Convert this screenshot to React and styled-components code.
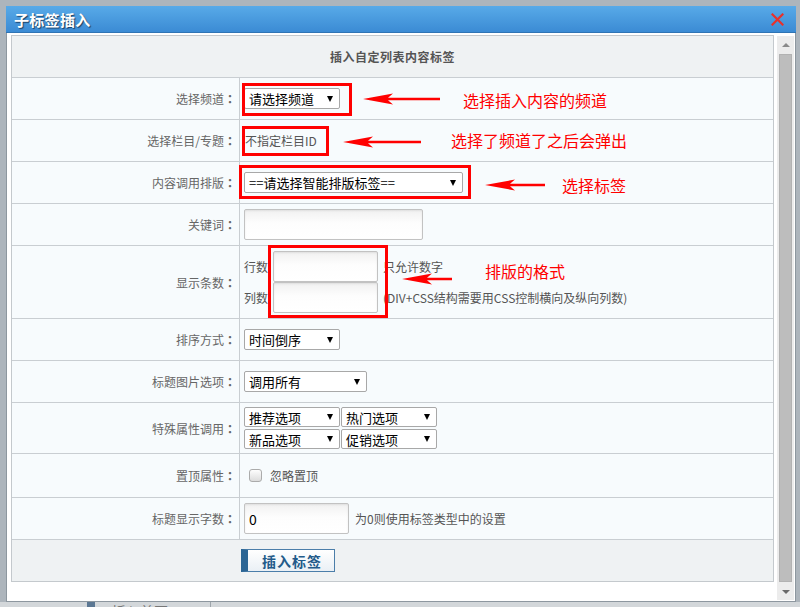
import React from "react";
import styled, { createGlobalStyle } from "styled-components";

const GlobalStyle = createGlobalStyle`
  html, body { margin: 0; padding: 0; }
  body {
    background: #adb5bc;
    font-family: "Noto Sans CJK SC", "Noto Sans", sans-serif;
    overflow: hidden;
  }
  #root { width: 800px; height: 607px; overflow: hidden; }
`;

const Page = styled.div`
  width: 800px;
  height: 607px;
  box-sizing: border-box;
  padding: 6px 0 0 6px;
  display: flex;
  flex-direction: column;
  overflow: hidden;
`;

const Dialog = styled.div`
  width: 790px;
  height: 596px;
  flex-shrink: 0;
  box-sizing: border-box;
  background: #fff;
  border: 1px solid #8d979f;
  border-top: none;
  display: flex;
  flex-direction: column;
`;

const TitleBar = styled.div`
  height: 27px;
  flex-shrink: 0;
  box-sizing: border-box;
  margin: 0 -1px;
  padding: 0 12px 0 8px;
  display: flex;
  align-items: center;
  justify-content: space-between;
  background: linear-gradient(#58aae8, #3b8bd4);
  border-bottom: 1px solid #2f74b4;
`;

const Title = styled.div`
  font-size: 15px;
  font-weight: 700;
  color: #fff;
  text-shadow: 1px 1px 1px #1c3f63;
  letter-spacing: 0.3px;
`;

const Close = styled.svg`
  width: 13px;
  height: 13px;
  display: block;
`;

const Content = styled.div`
  flex: 1;
  display: flex;
  gap: 3px;
  padding: 2px 1px 0 4px;
  min-height: 0;
`;

const Table = styled.div`
  position: relative;
  width: 763px;
  align-self: flex-start;
  box-sizing: border-box;
  border: 1px solid #c4c9cd;
  border-bottom: none;
  display: flex;
  flex-direction: column;
`;

const HeadRow = styled.div`
  height: 42px;
  box-sizing: border-box;
  border-bottom: 1px solid #c9ced2;
  background: #eff2f3;
  display: flex;
  align-items: center;
  justify-content: center;
  font-size: 12px;
  font-weight: 700;
  color: #555;
  letter-spacing: 0.5px;
`;

const Row = styled.div`
  height: ${(p) => p.$h || 42}px;
  box-sizing: border-box;
  border-bottom: 1px solid #c9ced2;
  background: #f7fbfd;
  display: grid;
  grid-template-columns: 228px 1fr;
`;

const Label = styled.div`
  box-sizing: border-box;
  border-right: 1px solid #c9ced2;
  display: flex;
  align-items: center;
  justify-content: flex-end;
  padding-right: 3px;
  font-size: 12px;
  color: #666;
`;

const Colon = styled.span`
  font-family: "Noto Sans CJK TC", "Noto Sans CJK SC", sans-serif;
  font-weight: 700;
`;

const Field = styled.div`
  display: flex;
  flex-direction: ${(p) => (p.$col ? "column" : "row")};
  align-items: ${(p) => (p.$col ? "flex-start" : "center")};
  justify-content: ${(p) => (p.$col ? "center" : "flex-start")};
  padding-left: 4px;
  font-size: 12px;
  color: #555;
`;

const Select = styled.div`
  box-sizing: border-box;
  width: ${(p) => p.$w}px;
  height: ${(p) => p.$h || 21}px;
  border: 1px solid #a8a8a8;
  border-radius: 2px;
  background: #fff;
  display: flex;
  align-items: center;
  justify-content: space-between;
  padding: 0 6px 0 4px;
  font-size: 13px;
  color: #000;
  white-space: nowrap;
`;

const Caret = styled.span`
  width: 0;
  height: 0;
  border-left: 3.5px solid transparent;
  border-right: 3.5px solid transparent;
  border-top: 6px solid #000;
`;

const SelectGrid = styled.div`
  display: grid;
  grid-template-columns: 96px 96px;
  column-gap: 1px;
  row-gap: 2px;
`;

const TextInput = styled.input`
  box-sizing: border-box;
  width: ${(p) => p.$w}px;
  height: 31px;
  margin: 0 0 0 ${(p) => p.$ml || 0}px;
  border: 1px solid #c2c2c2;
  border-radius: 2px;
  background: linear-gradient(#f1f1f1, #fdfdfd 45%, #fff);
  box-shadow: inset 0 1px 2px rgba(0, 0, 0, 0.08);
  padding: 0 4px;
  font-family: "Noto Sans CJK SC", "Noto Sans", sans-serif;
  font-size: 14px;
  color: #000;
  outline: none;
`;

const Line = styled.div`
  display: flex;
  align-items: center;
  white-space: nowrap;
`;

const Hint = styled.span`
  margin-left: ${(p) => p.$ml || 5}px;
  white-space: nowrap;
`;

const Check = styled.span`
  box-sizing: border-box;
  width: 13px;
  height: 13px;
  margin: 0 8px 0 5px;
  border: 1px solid #ababab;
  border-radius: 3px;
  background: linear-gradient(#fdfdfd, #dcdcdc);
`;

const FootRow = styled.div`
  height: 42px;
  box-sizing: border-box;
  border-bottom: 1px solid #c4c9cd;
  background: #eff2f3;
  display: flex;
  align-items: center;
  padding-left: 229px;
`;

const Button = styled.button`
  box-sizing: border-box;
  width: 94px;
  height: 23px;
  padding: 0 0 0 2px;
  border: 1px solid #4b7ea9;
  border-left: 7px solid #2b6594;
  background: linear-gradient(#ffffff, #eaf0f5);
  font-family: "Noto Sans CJK SC", "Noto Sans", sans-serif;
  font-size: 14px;
  font-weight: 700;
  color: #235b8a;
  letter-spacing: 1px;
`;

const Scrollbar = styled.div`
  width: 17px;
  margin-top: 1px;
  margin-bottom: 1px;
  background: #ececec;
  display: flex;
  flex-direction: column;
`;

const ScrollBtn = styled.div`
  height: 17px;
  flex-shrink: 0;
  display: flex;
  align-items: center;
  justify-content: center;
`;

const ScrollTri = styled.span`
  width: 0;
  height: 0;
  border-left: 4px solid transparent;
  border-right: 4px solid transparent;
  ${(p) => (p.$up ? "border-bottom: 4px solid #8a8a8a;" : "border-top: 4px solid #6a6a6a;")}
`;

const Thumb = styled.div`
  flex: 1;
  margin: 1px 2px;
  background: #bdbdbd;
  border: 1px solid #b2b2b2;
`;

const RedBox = styled.div`
  position: absolute;
  left: ${(p) => p.$x}px;
  top: ${(p) => p.$y}px;
  width: ${(p) => p.$w}px;
  height: ${(p) => p.$h}px;
  box-sizing: border-box;
  border: 3px solid #f00;
  pointer-events: none;
`;

const ArrowSvg = styled.svg`
  position: absolute;
  left: ${(p) => p.$x}px;
  top: ${(p) => p.$y}px;
  overflow: visible;
  pointer-events: none;
`;

const Note = styled.div`
  position: absolute;
  left: ${(p) => p.$x}px;
  top: ${(p) => p.$y}px;
  font-size: 16px;
  line-height: 20px;
  color: #f00;
  white-space: nowrap;
  pointer-events: none;
`;

const Strip = styled.div`
  height: 6px;
  flex-shrink: 0;
  margin-left: -6px;
  background: #d3d7da;
  display: flex;
  padding-left: 87px;
  overflow: hidden;
`;

const BgTab = styled.div`
  width: 98px;
  border-left: 8px solid #5b7793;
  border-right: 1px solid #9ea5ab;
  padding: 2px 0 0 17px;
  font-size: 14px;
  line-height: 14px;
  color: #777;
  white-space: nowrap;
`;

function Arrow({ x, y, w }) {
  return (
    <ArrowSvg $x={x} $y={y} width={w} height={12} viewBox={`0 0 ${w} 12`}>
      <polygon
        points={`0,6 30,0.5 25,4.8 ${w},4.8 ${w},7.2 25,7.2 30,11.5`}
        fill="#f00"
      />
    </ArrowSvg>
  );
}

const boxes = [
  { x: 230, y: 47, w: 110, h: 33 },
  { x: 230, y: 90, w: 87, h: 30 },
  { x: 227, y: 129, w: 232, h: 34 },
  { x: 256, y: 209, w: 120, h: 73 },
];

const arrows = [
  { x: 351, y: 57, w: 77 },
  { x: 331, y: 100, w: 78 },
  { x: 473, y: 143, w: 60 },
  { x: 390, y: 237, w: 50 },
];

const notes = [
  { x: 451, y: 54, t: "选择插入内容的频道" },
  { x: 439, y: 94, t: "选择了频道了之后会弹出" },
  { x: 550, y: 139, t: "选择标签" },
  { x: 473, y: 225, t: "排版的格式" },
];

function Sel({ w, h, children }) {
  return (
    <Select $w={w} $h={h}>
      <span>{children}</span>
      <Caret />
    </Select>
  );
}

function FieldLabel({ children }) {
  return (
    <Label>
      {children}
      <Colon>：</Colon>
    </Label>
  );
}

export default function App() {
  return (
    <>
      <GlobalStyle />
      <Page>
        <Dialog>
          <TitleBar>
            <Title>子标签插入</Title>
            <Close viewBox="0 0 13 13">
              <path d="M1.5 1.5 L11.5 11.5 M11.5 1.5 L1.5 11.5" stroke="#e8312b" strokeWidth="2.2" strokeLinecap="square" />
            </Close>
          </TitleBar>
          <Content>
            <Table>
              <HeadRow>插入自定列表内容标签</HeadRow>
              <Row>
                <FieldLabel>选择频道</FieldLabel>
                <Field>
                  <Sel w={96}>请选择频道</Sel>
                </Field>
              </Row>
              <Row>
                <FieldLabel>选择栏目/专题</FieldLabel>
                <Field>
                  <Hint $ml={1}>不指定栏目ID</Hint>
                </Field>
              </Row>
              <Row>
                <FieldLabel>内容调用排版</FieldLabel>
                <Field>
                  <Sel w={219}>==请选择智能排版标签==</Sel>
                </Field>
              </Row>
              <Row>
                <FieldLabel>关键词</FieldLabel>
                <Field>
                  <TextInput $w={179} readOnly defaultValue="" />
                </Field>
              </Row>
              <Row $h={73}>
                <FieldLabel>显示条数</FieldLabel>
                <Field $col>
                  <Line>
                    <span>行数</span>
                    <TextInput $w={105} $ml={5} readOnly defaultValue="" />
                    <Hint>只允许数字</Hint>
                  </Line>
                  <Line>
                    <span>列数</span>
                    <TextInput $w={105} $ml={5} readOnly defaultValue="" />
                    <Hint>(DIV+CSS结构需要用CSS控制横向及纵向列数)</Hint>
                  </Line>
                </Field>
              </Row>
              <Row>
                <FieldLabel>排序方式</FieldLabel>
                <Field>
                  <Sel w={96}>时间倒序</Sel>
                </Field>
              </Row>
              <Row>
                <FieldLabel>标题图片选项</FieldLabel>
                <Field>
                  <Sel w={123}>调用所有</Sel>
                </Field>
              </Row>
              <Row $h={51}>
                <FieldLabel>特殊属性调用</FieldLabel>
                <Field>
                  <SelectGrid>
                    <Sel w={96} h={20}>推荐选项</Sel>
                    <Sel w={96} h={20}>热门选项</Sel>
                    <Sel w={96} h={20}>新品选项</Sel>
                    <Sel w={96} h={20}>促销选项</Sel>
                  </SelectGrid>
                </Field>
              </Row>
              <Row $h={44}>
                <FieldLabel>置顶属性</FieldLabel>
                <Field>
                  <Check />
                  <span>忽略置顶</span>
                </Field>
              </Row>
              <Row>
                <FieldLabel>标题显示字数</FieldLabel>
                <Field>
                  <TextInput $w={105} readOnly defaultValue="0" />
                  <Hint $ml={6}>为0则使用标签类型中的设置</Hint>
                </Field>
              </Row>
              <FootRow>
                <Button type="button">插入标签</Button>
              </FootRow>

              {boxes.map((b, i) => (
                <RedBox key={"b" + i} $x={b.x} $y={b.y} $w={b.w} $h={b.h} />
              ))}
              {arrows.map((a, i) => (
                <Arrow key={"a" + i} x={a.x} y={a.y} w={a.w} />
              ))}
              {notes.map((n, i) => (
                <Note key={"n" + i} $x={n.x} $y={n.y}>
                  {n.t}
                </Note>
              ))}
            </Table>
            <Scrollbar>
              <ScrollBtn>
                <ScrollTri $up />
              </ScrollBtn>
              <Thumb />
              <ScrollBtn>
                <ScrollTri />
              </ScrollBtn>
            </Scrollbar>
          </Content>
        </Dialog>
        <Strip>
          <BgTab>插入首页</BgTab>
        </Strip>
      </Page>
    </>
  );
}
